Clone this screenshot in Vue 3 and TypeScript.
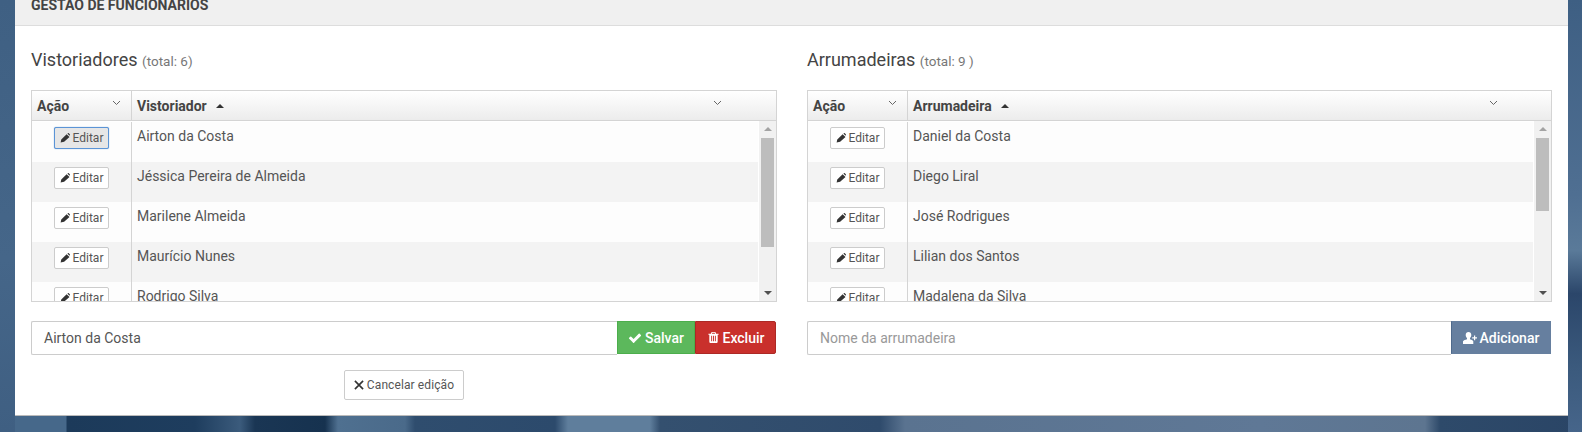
<script setup lang="ts">
interface Grid {
  title: string
  total: string
  column: string
  rows: string[]
  thumb: number
  focused: boolean
}

const grids: Grid[] = [
  {
    title: 'Vistoriadores',
    total: '(total: 6)',
    column: 'Vistoriador',
    rows: ['Airton da Costa', 'Jéssica Pereira de Almeida', 'Marilene Almeida', 'Maurício Nunes', 'Rodrigo Silva'],
    thumb: 109,
    focused: true
  },
  {
    title: 'Arrumadeiras',
    total: '(total: 9 )',
    column: 'Arrumadeira',
    rows: ['Daniel da Costa', 'Diego Liral', 'José Rodrigues', 'Lilian dos Santos', 'Madalena da Silva'],
    thumb: 73,
    focused: false
  }
]
</script>

<template>
  <div class="page">
    <section class="panel">
      <header class="panel-head">GESTÃO DE FUNCIONÁRIOS</header>
      <div class="panel-body">
        <div v-for="(g, gi) in grids" :key="g.title" class="col">
          <h3 class="title">{{ g.title }} <small>{{ g.total }}</small></h3>
          <div class="grid">
            <div class="grid-head">
              <div class="hcell hcell-action">
                <span>Ação</span>
                <svg class="chev" width="9" height="6" viewBox="0 0 9 6"><path d="M1 1l3.500 3.500L8 1" fill="none" stroke="#666" stroke-width="1" /></svg>
              </div>
              <div class="hcell hcell-name">
                <span>{{ g.column }}</span>
                <i class="sort"></i>
                <svg class="chev chev-name" width="9" height="6" viewBox="0 0 9 6"><path d="M1 1l3.500 3.500L8 1" fill="none" stroke="#666" stroke-width="1" /></svg>
              </div>
            </div>
            <div class="grid-body">
              <div class="rows">
                <div v-for="(r, i) in g.rows" :key="r" class="row" :class="{ even: i % 2 === 1 }">
                  <div class="cell-action">
                    <button class="edit" :class="{ focused: g.focused && i === 0 }" type="button">
                      <svg width="10" height="10" viewBox="0 0 16 16"><path d="M1 15l1-4.600L10.600 1.800l4.600 4.600L6.600 13.800zM11.800.8l1-.6c.4-.2.900-.2 1.200.1l1.700 1.700c.3.300.3.800.1 1.200l-.6 1z" fill="#333" /></svg>
                      Editar
                    </button>
                  </div>
                  <div class="cell-name">{{ r }}</div>
                </div>
              </div>
              <div class="scrollbar">
                <i class="arrow up"></i>
                <div class="track"><div class="thumb" :style="{ height: g.thumb + 'px' }"></div></div>
                <i class="arrow down"></i>
              </div>
            </div>
          </div>

          <div class="input-group">
            <div v-if="gi === 0" class="input value">Airton da Costa</div>
            <div v-else class="input placeholder">Nome da arrumadeira</div>
            <template v-if="gi === 0">
              <button class="action save" type="button">
                <svg width="14" height="14" viewBox="0 0 1792 1792"><path fill="#fff" d="M1671 566q0 40-28 68l-724 724-136 136q-28 28-68 28t-68-28l-136-136-362-362q-28-28-28-68t28-68l136-136q28-28 68-28t68 28l294 295 656-657q28-28 68-28t68 28l136 136q28 28 28 68z" /></svg>
                Salvar
              </button>
              <button class="action del" type="button">
                <svg width="13" height="13" viewBox="0 0 1792 1792"><path fill="#fff" d="M704 1376v-704q0-14-9-23t-23-9h-64q-14 0-23 9t-9 23v704q0 14 9 23t23 9h64q14 0 23-9t9-23zm256 0v-704q0-14-9-23t-23-9h-64q-14 0-23 9t-9 23v704q0 14 9 23t23 9h64q14 0 23-9t9-23zm256 0v-704q0-14-9-23t-23-9h-64q-14 0-23 9t-9 23v704q0 14 9 23t23 9h64q14 0 23-9t9-23zm-544-992h448l-48-117q-7-9-17-11h-317q-10 2-17 11zm928 32v64q0 14-9 23t-23 9h-96v948q0 83-47 143.500t-113 60.500h-832q-66 0-113-58.500t-47-141.500v-952h-96q-14 0-23-9t-9-23v-64q0-14 9-23t23-9h309l70-167q15-37 54-63t79-26h320q40 0 79 26t54 63l70 167h309q14 0 23 9t9 23z" /></svg>
                Excluir
              </button>
            </template>
            <button v-else class="action add" type="button">
              <svg width="14" height="12" viewBox="0 0 14 12"><path fill="#fff" d="M5.500 0C7.200 0 8.300 1.300 8.300 3c0 1.300-.6 2.400-1.300 3v1.300c1.500.5 3 1.100 3.300 2V12H0V9.300c.3-.9 2.500-1.500 4-2V6C3.300 5.400 2.700 4.300 2.700 3 2.700 1.300 3.800 0 5.500 0zM11 3.500h1.200v1.800H14v1.200h-1.800v1.800H11V6.500H9.200V5.300H11z" /></svg>
              Adicionar
            </button>
          </div>

          <div v-if="gi === 0" class="cancel-wrap">
            <button class="cancel" type="button">
              <svg width="10" height="10" viewBox="0 0 11 11"><path d="M1 1l9 9M10 1l-9 9" stroke="#333" stroke-width="1.800" fill="none" /></svg>
              Cancelar edição
            </button>
          </div>
        </div>
      </div>
    </section>
  </div>
</template>

<style>
html, body { margin: 0; padding: 0; }
</style>

<style scoped>
.page {
  width: 1582px;
  height: 432px;
  box-sizing: border-box;
  padding: 0 14px 0 15px;
  overflow: hidden;
  font-family: Roboto, "Liberation Sans", sans-serif;
  color: #555;
  background-color: #34506f;
  background-image:
    linear-gradient(180deg, #3f6083 0%, #456689 60%, #3f5f82 100%),
    linear-gradient(180deg, #3e5f83 0%, #4f6f92 45%, #5a7a99 58%, #2b466a 68%, #3b5a7d 85%, #46658a 100%),
    linear-gradient(90deg, #46688a 0, #46688a 66px, #1c3a5a 67px, #1e3d5e 195px, #3b5b7c 240px, #1a3654 255px, #16324f 325px, #4f7090 338px, #4a6a8a 405px, #2f4d6e 415px, #2c4a6c 555px, #5f7e9c 568px, #5f7e9c 650px, #34506f 660px, #2f4b6c 880px, #5a7390 905px, #5f7896 1260px, #5d7590 1425px, #2e4a6a 1440px, #2a4566 1582px);
  background-repeat: no-repeat;
  background-size: 15px 432px, 14px 432px, 1582px 432px;
  background-position: 0 0, 1568px 0, 0 0;
}
.panel {
  height: 416px;
  box-sizing: border-box;
  background: #fff;
  border-bottom: 1px solid #bbb;
  overflow: hidden;
}
.panel-head {
  height: 25px;
  background: #f0f0f0;
  border-bottom: 1px solid #ddd;
  padding-left: 16px;
  font-size: 14px;
  line-height: 10px;
  font-weight: 700;
  color: #444;
  overflow: hidden;
}
.panel-body {
  display: grid;
  grid-template-columns: 746px 745px;
  column-gap: 30px;
  padding: 0 16px;
}
.title {
  margin: 0;
  padding-top: 23px;
  height: 41px;
  font-size: 18px;
  line-height: 22px;
  font-weight: 400;
  color: #444;
}
.title small {
  font-size: 13.5px;
  color: #777;
  font-weight: 400;
}
.grid {
  height: 212px;
  box-sizing: border-box;
  border: 1px solid #d4d4d4;
  overflow: hidden;
  background: #fff;
}
.grid-head {
  display: flex;
  height: 30px;
  box-sizing: border-box;
  border-bottom: 1px solid #d4d4d4;
  background: linear-gradient(180deg, #ffffff 0%, #ececec 100%);
  font-size: 14px;
  font-weight: 700;
  color: #444;
}
.hcell {
  position: relative;
  display: flex;
  align-items: center;
  padding-left: 5px;
  height: 29px;
  box-sizing: border-box;
}
.hcell-action {
  width: 100px;
  flex: none;
  border-right: 1px solid #d4d4d4;
}
.hcell-name { flex: 1; }
.chev {
  position: absolute;
  left: 80px;
  top: 9px;
}
.chev-name { left: 581px; }
.sort {
  display: inline-block;
  margin-left: 9px;
  width: 0;
  height: 0;
  border-left: 4px solid transparent;
  border-right: 4px solid transparent;
  border-bottom: 4px solid #333;
}
.grid-body {
  display: flex;
  height: 181px;
  overflow: hidden;
}
.rows {
  flex: 1;
  min-width: 0;
  padding-top: 1px;
}
.row {
  display: flex;
  height: 40px;
  background: #fdfdfd;
}
.row.even { background: #f3f3f3; }
.cell-action {
  width: 100px;
  flex: none;
  box-sizing: border-box;
  border-right: 1px solid #d4d4d4;
  display: flex;
  justify-content: center;
  padding-top: 5px;
}
.cell-name {
  padding: 4px 5px 0;
  font-size: 14px;
  line-height: 20px;
  color: #555;
}
.edit {
  width: 55px;
  height: 22px;
  box-sizing: border-box;
  padding: 0;
  display: flex;
  align-items: center;
  justify-content: center;
  gap: 3px;
  font: 400 12px Roboto, "Liberation Sans", sans-serif;
  color: #555;
  background: #fff;
  border: 1px solid #ccc;
  border-radius: 2px;
}
.edit.focused {
  background: #e6e6e6;
  border-color: #5b94d6;
  box-shadow: 0 0 1px #5b94d6;
}
.scrollbar {
  width: 17px;
  flex: none;
  margin-left: 1px;
  background: #f1f1f1;
  display: flex;
  flex-direction: column;
  align-items: center;
}
.arrow {
  display: block;
  width: 0;
  height: 0;
  border-left: 4px solid transparent;
  border-right: 4px solid transparent;
}
.arrow.up {
  margin-top: 6px;
  border-bottom: 4px solid #a3a3a3;
}
.arrow.down {
  margin-bottom: 7px;
  border-top: 4px solid #505050;
}
.track {
  flex: 1;
  width: 13px;
  padding-top: 7px;
}
.thumb { background: #bdbdbd; }
.input-group {
  display: flex;
  align-items: flex-start;
  margin: 19px 1px 0 0;
  height: 34px;
}
.input {
  flex: 1;
  box-sizing: border-box;
  border: 1px solid #ccc;
  border-right: 0;
  border-radius: 2px 0 0 2px;
  padding: 0 12px;
  height: 34px;
  font-size: 14px;
  line-height: 32px;
}
.value { color: #555; }
.placeholder { color: #999; }
.action {
  flex: none;
  height: 33px;
  box-sizing: border-box;
  display: flex;
  align-items: center;
  justify-content: center;
  gap: 3px;
  padding: 0;
  border: 1px solid transparent;
  font: 500 14px Roboto, "Liberation Sans", sans-serif;
  color: #fff;
}
.save { width: 78px; background: #5cb85c; border-color: #4cae4c; }
.del { width: 81px; background: #c9302c; border-color: #ac2925; border-radius: 0 2px 2px 0; }
.add { width: 100px; background: #667f9f; border-color: #667f9f; border-left-color: #4f6a8c; }
.cancel-wrap {
  display: flex;
  justify-content: center;
  margin-top: 15px;
}
.cancel {
  width: 120px;
  height: 30px;
  box-sizing: border-box;
  padding: 0;
  display: flex;
  align-items: center;
  justify-content: center;
  gap: 3px;
  background: #fff;
  border: 1px solid #ccc;
  border-radius: 2px;
  font: 400 12px Roboto, "Liberation Sans", sans-serif;
  letter-spacing: .1px;
  color: #555;
}
</style>
